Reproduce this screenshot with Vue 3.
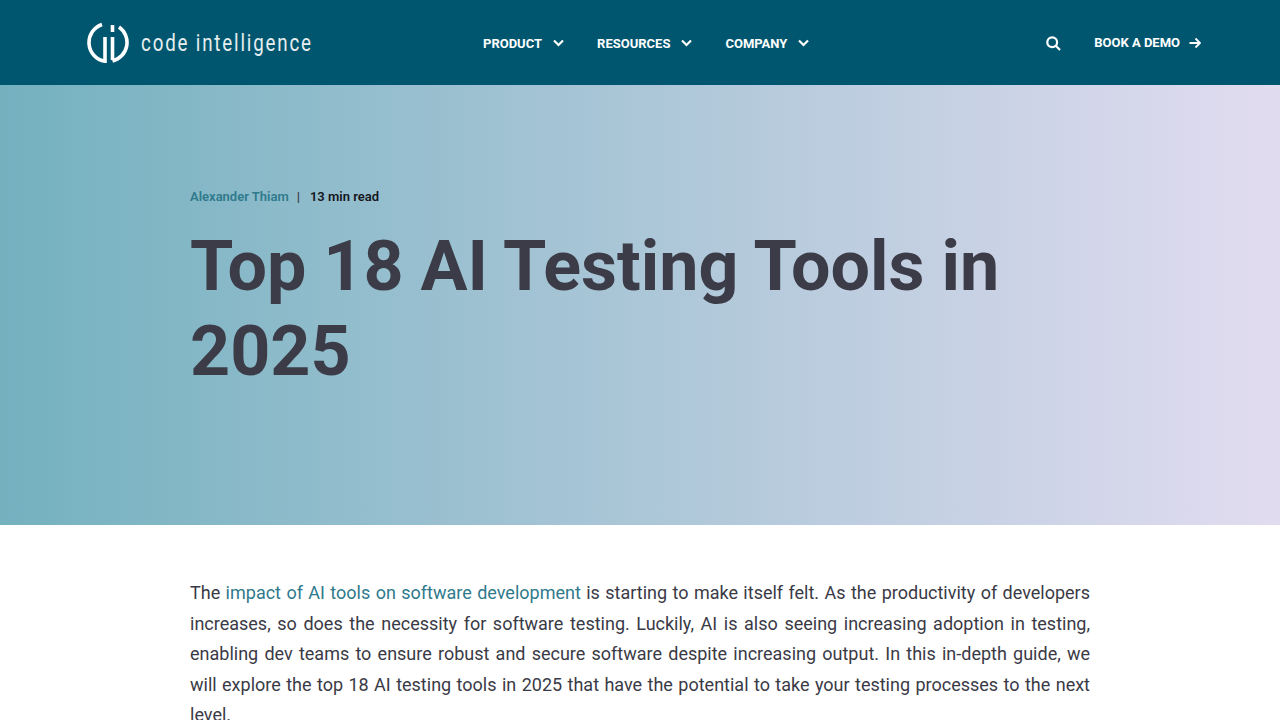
<script setup>
const nav = ['PRODUCT', 'RESOURCES', 'COMPANY']
</script>

<template>
  <div class="page">
    <header class="bar">
      <a class="logo">
        <svg class="mark" width="42" height="41" viewBox="0 0 42 41" fill="none" stroke="#fff" stroke-width="3.6">
          <path d="M15 2.47 A19 19 0 0 0 18 39.26 V15" />
          <path d="M25.5 38.96 A19 19 0 0 0 32 5" />
          <path d="M25.5 15 V38" />
          <path d="M25.5 3 V10" />
        </svg>
        <span class="word">code intelligence</span>
      </a>
      <nav class="nav">
        <a v-for="n in nav" :key="n" class="nav-item">
          {{ n }}
          <svg width="11" height="8" viewBox="0 0 11 8" fill="none" stroke="#fff" stroke-width="2.2"><path d="M1 1.5 L5.5 6 L10 1.5" /></svg>
        </a>
      </nav>
      <div class="right">
        <svg class="search" width="15" height="15" viewBox="0 0 15 15" fill="none" stroke="#fff" stroke-width="2.2"><circle cx="6.2" cy="6.2" r="4.9" /><path d="M9.8 9.8 L14 14" /></svg>
        <a class="demo">
          BOOK A DEMO
          <svg width="12" height="12" viewBox="0 0 12 12" fill="none" stroke="#fff" stroke-width="1.8"><path d="M0.5 6 H11 M6.5 1.5 L11 6 L6.5 10.5" /></svg>
        </a>
      </div>
    </header>
    <section class="hero">
      <div class="meta">
        <span class="author">Alexander Thiam</span>
        <span class="sep">|</span>
        <span class="read">13 min read</span>
      </div>
      <h1 class="title">Top 18 AI Testing Tools in 2025</h1>
    </section>
    <main class="body">
      <p>The <a class="link">impact of AI tools on software development</a> is starting to make itself felt. As the productivity of developers increases, so does the necessity for software testing. Luckily, AI is also seeing increasing adoption in testing, enabling dev teams to ensure robust and secure software despite increasing output. In this in-depth guide, we will explore the top 18 AI testing tools in 2025 that have the potential to take your testing processes to the next level.</p>
    </main>
  </div>
</template>

<style>
html, body { margin: 0; overflow: hidden; background: #fff; }
</style>

<style scoped>
.page { font-family: Roboto, sans-serif; height: 720px; overflow: hidden; }
.bar { height: 85px; background: #00566f; display: flex; align-items: center; padding: 0 79px 0 88px; box-sizing: border-box; color: #fff; }
.logo { display: flex; align-items: center; width: 395px; flex: none; gap: 12px; margin-left: -1px; margin-right: 1px; }
.mark { flex: none; }
.word { font-family: Roboto, sans-serif; font-weight: 400; font-size: 24px; color: #e6eef0; letter-spacing: 2.35px; white-space: nowrap; transform: scaleX(0.78); transform-origin: left center; }
.nav { display: flex; gap: 33px; font-size: 13px; font-weight: 700; padding-top: 1px; }
.nav-item { display: flex; align-items: center; gap: 11px; }
.right { margin-left: auto; display: flex; align-items: center; gap: 33px; font-size: 13px; font-weight: 700; }
.search { margin-top: 1px; }
.demo { display: flex; align-items: center; gap: 9px; }
.hero { height: 440px; box-sizing: border-box; padding: 104px 190px 0; background: linear-gradient(90deg, #74b1bf 0%, #e2dcf0 100%); }
.meta { display: flex; align-items: center; font-size: 13px; font-weight: 600; line-height: 16px; }
.author { color: #2f7a8c; }
.sep { margin: 0 10px 0 8px; color: #3a3a46; }
.read { color: #16161d; }
.title { margin: 19px 0 0; max-width: 900px; font-size: 70px; line-height: 85px; font-weight: 700; word-spacing: -0.5px; color: #3c3c48; }
.body { padding: 53px 190px 0; }
.body p { margin: 0; font-size: 18px; line-height: 30.6px; color: #3a3a46; text-align: justify; }
.link { color: #2f7a8c; }
</style>
